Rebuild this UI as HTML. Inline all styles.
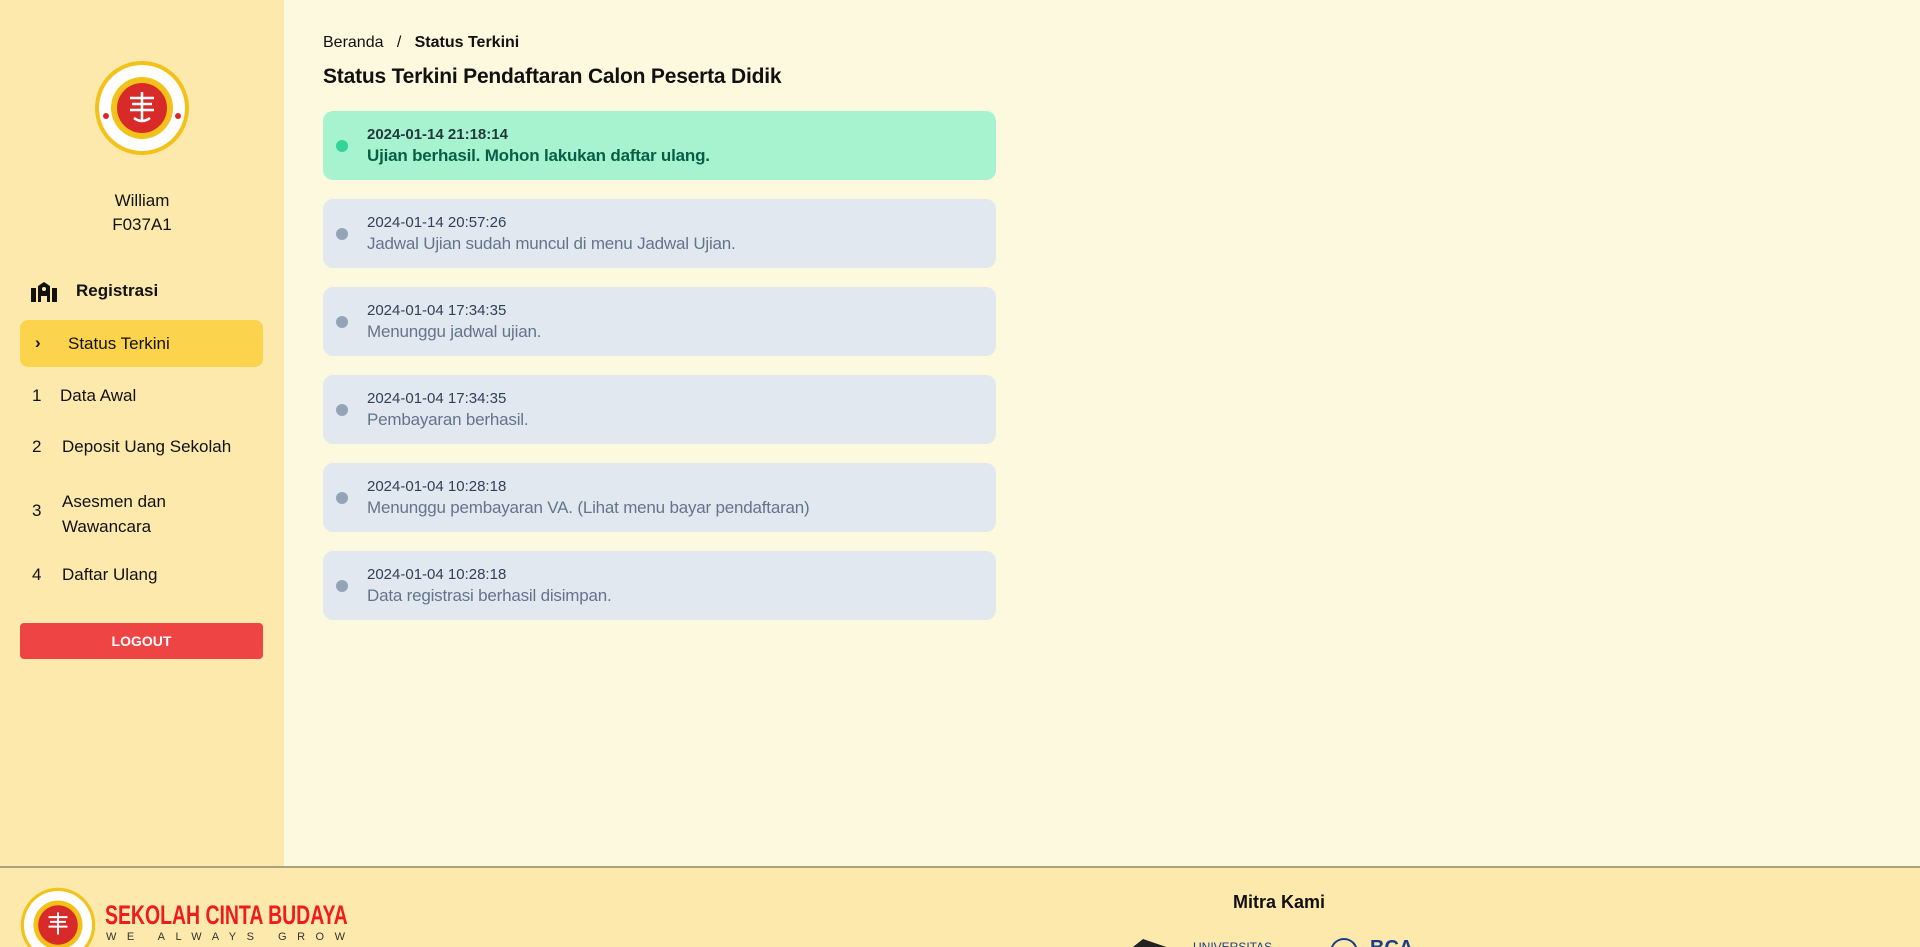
<!DOCTYPE html>
<html style="width:1920px;height:947px;overflow:hidden"><head><meta charset="utf-8"><style>
*{margin:0;padding:0;box-sizing:border-box}
body{width:1920px;height:947px;overflow:hidden;background:#fdf9df;font-family:"Liberation Sans",sans-serif;color:#111;position:relative}
.side{position:absolute;left:0;top:0;width:284px;height:867px;background:#fde9ab}
.abs{position:absolute}
.card{position:absolute;left:323px;width:673px;height:69px;border-radius:10px;background:#e2e8f0}
.card .dot{position:absolute;left:13px;top:29px;width:12px;height:12px;border-radius:50%;background:#94a3b8}
.card .d{position:absolute;left:44px;top:15px;font-size:15px;color:#334155}
.card .m{position:absolute;left:44px;top:35px;font-size:17px;color:#64748b;letter-spacing:-0.2px}
.g{background:#a7f3d0}.g .dot{background:#34d399}.g .d{font-weight:bold;color:#1e3a3a}.g .m{color:#065f46;font-weight:bold}
.nav{position:absolute;font-size:17px}
.foot{position:absolute;left:0;top:866px;width:1920px;height:81px;background:#fde9ab;border-top:2px solid #a9a27c;overflow:hidden}
</style></head><body>
<div class="side">
 <svg class="abs" style="left:94px;top:60px" width="96" height="96" viewBox="0 0 96 96">
  <circle cx="48" cy="48" r="47" fill="#f2c21b"/><circle cx="48" cy="48" r="43" fill="#fff"/>
  <circle cx="48" cy="48" r="31" fill="#f2c21b"/><circle cx="48" cy="48" r="25" fill="#d92a2a"/>
  <path d="M36 38h24M38 44h20M36 50h24M48 32v28M40 58q8 6 16 0" stroke="#fff" stroke-width="2.5" fill="none"/>
  <circle cx="12" cy="56" r="3" fill="#d92a2a"/><circle cx="84" cy="56" r="3" fill="#d92a2a"/>
 </svg>
 <div class="abs" style="left:0;width:284px;top:189px;text-align:center;font-size:17px;line-height:24px">William<br>F037A1</div>
 <svg class="abs" style="left:31px;top:282px" width="26" height="20" viewBox="0 0 26 20"><path d="M0 6h5v14H0zM21 6h5v14h-5zM7 4l6-4 6 4v16h-3v-6h-6v6H7z" fill="#111"/><circle cx="13" cy="7" r="2" fill="#fde9ab"/></svg>
 <div class="nav" style="left:76px;top:281px;font-weight:bold">Registrasi</div>
 <div class="abs" style="left:20px;top:320px;width:243px;height:47px;border-radius:8px;background:#fcd34d"></div>
 <div class="nav" style="left:35px;top:333px;font-weight:bold">›</div>
 <div class="nav" style="left:68px;top:334px">Status Terkini</div>
 <div class="nav" style="left:32px;top:386px">1</div><div class="nav" style="left:60px;top:386px">Data Awal</div>
 <div class="nav" style="left:32px;top:437px">2</div><div class="nav" style="left:62px;top:437px">Deposit Uang Sekolah</div>
 <div class="nav" style="left:32px;top:501px">3</div><div class="nav" style="left:62px;top:489px;line-height:25px">Asesmen dan<br>Wawancara</div>
 <div class="nav" style="left:32px;top:565px">4</div><div class="nav" style="left:62px;top:565px">Daftar Ulang</div>
 <div class="abs" style="left:20px;top:623px;width:243px;height:36px;border-radius:4px;background:#ef4444;color:#fff;font-weight:bold;font-size:14px;text-align:center;line-height:36px">LOGOUT</div>
</div>
<div class="abs" style="left:323px;top:34px;font-size:16px">Beranda &nbsp; / &nbsp; <b>Status Terkini</b></div>
<div class="abs" style="left:323px;top:65px;font-size:21px;font-weight:bold;letter-spacing:-0.2px">Status Terkini Pendaftaran Calon Peserta Didik</div>
<div class="card g" style="top:111px"><div class="dot"></div><div class="d">2024-01-14 21:18:14</div><div class="m">Ujian berhasil. Mohon lakukan daftar ulang.</div></div>
<div class="card" style="top:199px"><div class="dot"></div><div class="d">2024-01-14 20:57:26</div><div class="m">Jadwal Ujian sudah muncul di menu Jadwal Ujian.</div></div>
<div class="card" style="top:287px"><div class="dot"></div><div class="d">2024-01-04 17:34:35</div><div class="m">Menunggu jadwal ujian.</div></div>
<div class="card" style="top:375px"><div class="dot"></div><div class="d">2024-01-04 17:34:35</div><div class="m">Pembayaran berhasil.</div></div>
<div class="card" style="top:463px"><div class="dot"></div><div class="d">2024-01-04 10:28:18</div><div class="m">Menunggu pembayaran VA. (Lihat menu bayar pendaftaran)</div></div>
<div class="card" style="top:551px"><div class="dot"></div><div class="d">2024-01-04 10:28:18</div><div class="m">Data registrasi berhasil disimpan.</div></div>
<div class="foot">
<svg class="abs" style="left:20px;top:19px" width="76" height="76" viewBox="0 0 96 96"><circle cx="48" cy="48" r="47" fill="#f2c21b"/><circle cx="48" cy="48" r="43" fill="#fff"/><circle cx="48" cy="48" r="31" fill="#f2c21b"/><circle cx="48" cy="48" r="25" fill="#d92a2a"/><path d="M36 38h24M38 44h20M36 50h24M48 32v28" stroke="#fff" stroke-width="2.5"/></svg>
<div class="abs" style="left:105px;top:32px;font-size:27px;font-weight:bold;color:#ee1c1c;transform:scaleX(.72);transform-origin:left;white-space:nowrap">SEKOLAH CINTA BUDAYA</div>
<div class="abs" style="left:106px;top:63px;font-size:11px;letter-spacing:10.5px;color:#333;white-space:nowrap">WE ALWAYS GROW</div>
<div class="abs" style="left:1233px;top:24px;font-size:18px;font-weight:bold">Mitra Kami</div>
<div class="abs" style="left:1128px;top:71px;width:50px;height:12px;background:#222;clip-path:polygon(30% 0,100% 100%,0 100%)"></div>
<div class="abs" style="left:1193px;top:72px;font-size:12px;color:#1e3a8a">UNIVERSITAS</div>
<div class="abs" style="left:1330px;top:70px;width:28px;height:14px;border:2px solid #1e3a8a;border-radius:14px 14px 0 0"></div>
<div class="abs" style="left:1370px;top:69px;font-size:20px;font-weight:bold;color:#1e3a8a">BCA</div>
</div>
</body></html>
